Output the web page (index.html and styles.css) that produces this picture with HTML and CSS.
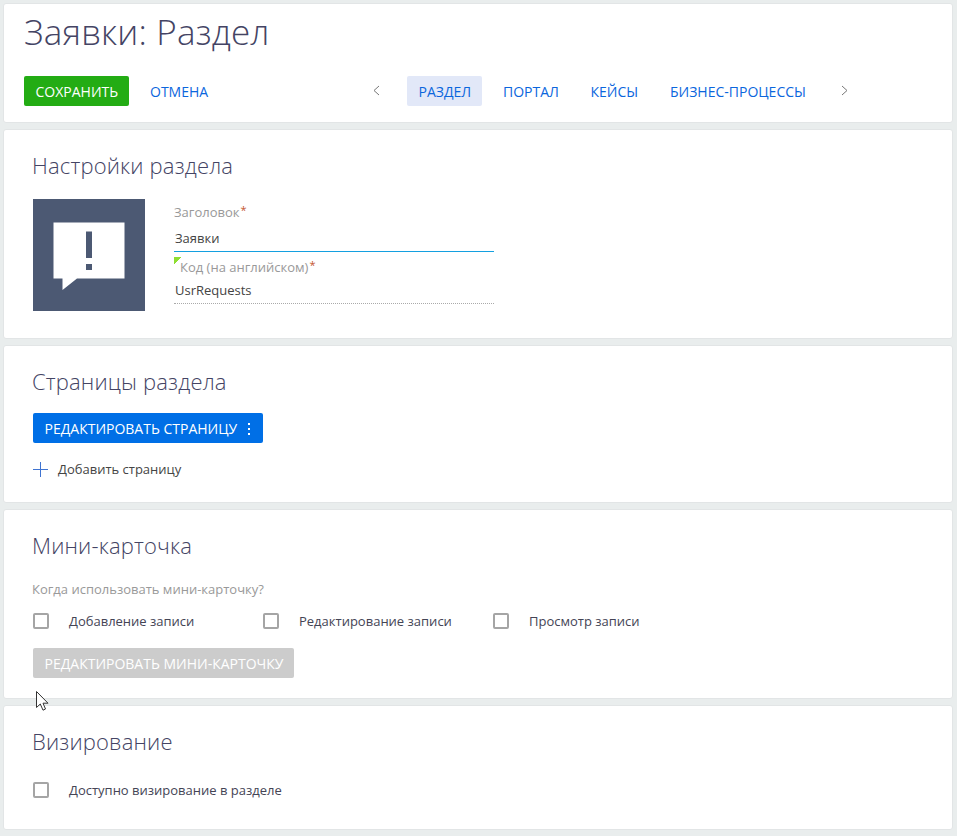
FILE: index.html
```html
<!DOCTYPE html>
<html lang="ru">
<head>
<meta charset="utf-8">
<title>Заявки: Раздел</title>
<link rel="stylesheet" href="styles.css">
</head>
<body>
<main class="page">
  <header class="card top">
    <h1 class="title">Заявки: Раздел</h1>
    <div class="toolbar">
      <button class="btn save">СОХРАНИТЬ</button>
      <button class="btn cancel">ОТМЕНА</button>
      <nav class="tabs">
        <svg class="arrow prev" width="8" height="11" viewBox="0 0 8 11"><path d="M7 1 2 5.5 7 10"/></svg>
        <a class="tab active">РАЗДЕЛ</a>
        <a class="tab portal">ПОРТАЛ</a>
        <a class="tab cases">КЕЙСЫ</a>
        <a class="tab process">БИЗНЕС-ПРОЦЕССЫ</a>
        <svg class="arrow next" width="8" height="11" viewBox="0 0 8 11"><path d="M2 1 7 5.5 2 10"/></svg>
      </nav>
    </div>
  </header>

  <section class="card settings">
    <h2 class="heading">Настройки раздела</h2>
    <div class="settings-row">
      <svg class="avatar" width="112" height="112" viewBox="0 0 112 112">
        <rect width="112" height="112" fill="#4c5973"/>
        <path d="M20.500 23.500H91.500V79.500H44L29.500 91V79.500H20.500Z" fill="#fff"/>
        <path d="M53 32.500h6v26.500h-6zM53 65h6v6h-6z" fill="#4c5973"/>
      </svg>
      <div class="fields">
        <div class="label">Заголовок<span class="req">*</span></div>
        <div class="value focus">Заявки</div>
        <div class="label code">Код (на английском)<span class="req">*</span></div>
        <div class="value locked">UsrRequests</div>
      </div>
    </div>
  </section>

  <section class="card pages">
    <h2 class="heading">Страницы раздела</h2>
    <button class="btn edit-page">РЕДАКТИРОВАТЬ СТРАНИЦУ
      <svg width="2" height="12" viewBox="0 0 2 12"><path d="M0 0h2v2H0zM0 5h2v2H0zM0 10h2v2H0z" fill="#fff"/></svg>
    </button>
    <a class="add">
      <svg width="15" height="15" viewBox="0 0 15 15"><path d="M7.500 0v15M0 7.500h15" stroke="#3f74d1" fill="none"/></svg>
      <span>Добавить страницу</span>
    </a>
  </section>

  <section class="card mini">
    <h2 class="heading">Мини-карточка</h2>
    <p class="question">Когда использовать мини-карточку?</p>
    <div class="checks">
      <label class="check"><span class="box"></span><span>Добавление записи</span></label>
      <label class="check"><span class="box"></span><span>Редактирование записи</span></label>
      <label class="check"><span class="box"></span><span>Просмотр записи</span></label>
    </div>
    <button class="btn edit-mini">РЕДАКТИРОВАТЬ МИНИ-КАРТОЧКУ</button>
  </section>

  <section class="card visa">
    <h2 class="heading">Визирование</h2>
    <label class="check"><span class="box"></span><span>Доступно визирование в разделе</span></label>
  </section>
</main>
<svg class="cursor" width="13" height="20" viewBox="0 0 13 20"><path d="M.5.5V16.500L4.300 13 7 19.200 9.500 18 7 12.200H12Z" fill="#fff" stroke="#333"/></svg>
</body>
</html>
```

FILE: styles.css
```css
* { box-sizing: border-box; }
body {
  margin: 0;
  background: #e9eded;
  color: #444;
  font-family: "Open Sans", "Noto Sans", sans-serif;
  font-size: 13px;
  line-height: 20px;
}
.page { display: flex; flex-direction: column; gap: 6px; width: 953px; padding: 3px 0 0 3px; }
.card { background: #fff; border: 1px solid #e2e5e6; border-radius: 3px; padding: 19px 29px 0; }
.top { height: 120px; padding: 11px 20px 0; }
.settings { height: 210px; }
.pages { height: 158px; }
.mini { height: 190px; }
.visa { height: 125px; }

.title { margin: 0; font-size: 35px; font-weight: 300; line-height: 34px; letter-spacing: 0.17px; color: #444464; white-space: nowrap; }
.heading { margin: 0 0 0 -1px; padding-bottom: 1px; font-size: 22px; font-weight: 300; line-height: 32px; letter-spacing: 0.16px; color: #444464; }

.btn {
  display: flex; align-items: center;
  height: 30px; margin: 0; padding: 2px 11px 0 11.5px;
  border: 0; border-radius: 2px;
  font: 14px/28px "Open Sans", "Noto Sans", sans-serif;
  color: #fff; background: none; white-space: nowrap;
}
.toolbar { display: flex; margin-top: 27px; }
.save { width: 105px; background: #23ac14; }
.cancel { width: 80px; margin-left: 10px; padding-left: 11px; color: #0b66dd; }
.tabs { display: flex; align-items: center; margin-left: 153px; }
.tab { height: 30px; padding: 2px 11px 0; border-radius: 2px; font-size: 14px; line-height: 28px; color: #0b66dd; white-space: nowrap; }
.active { width: 75px; margin-left: 27px; padding-left: 11.5px; background: #e2e8f8; }
.portal { width: 77px; margin-left: 10px; }
.cases { width: 70px; margin-left: 10px; padding-left: 11.5px; }
.process { width: 157px; margin-left: 10px; }
.arrow { margin-bottom: 2px; fill: none; stroke: #777; stroke-width: 1; }
.next { margin-left: 24px; }

.settings-row { display: flex; gap: 29px; margin-top: 17px; }
.avatar { flex: none; }
.fields { width: 320px; }
.label { height: 26px; padding-top: 3px; color: #999; }
.req { display: inline-block; margin-left: 1px; color: #c4562f; font-size: 11px; line-height: 12px; vertical-align: 3px; }
.value { height: 27px; padding-left: 1px; line-height: 26px; color: #444; }
.focus { border-bottom: 1px solid #14a0e0; }
.code {
  height: 25px; padding: 5px 0 0 6px;
  background: linear-gradient(135deg, #8ede32 50%, transparent 51%) 0 5px / 7px 7px no-repeat;
}
.locked { border-bottom: 1px dotted #aaa; }

.edit-page { width: 230px; margin-top: 15px; padding-right: 13px; justify-content: space-between; background: #006fe6; }
.edit-page svg { margin-bottom: 1px; }
.add { display: flex; align-items: center; gap: 10px; margin-top: 16px; }

.question { margin: 17px 0 0 -1px; color: #999; }
.checks { display: flex; margin-top: 14px; }
.checks .check { width: 230px; }
.check { display: flex; align-items: center; gap: 20px; height: 16px; color: #444455; white-space: nowrap; }
.box { width: 16px; height: 16px; border: 2px solid #a5a5a5; border-radius: 2px; }
.edit-mini { width: 261px; margin-top: 19px; background: #ccc; }
.visa .check { margin-top: 24px; }

/* Pointer floats above the cards */
.cursor { position: absolute; left: 36px; top: 691px; }
```
